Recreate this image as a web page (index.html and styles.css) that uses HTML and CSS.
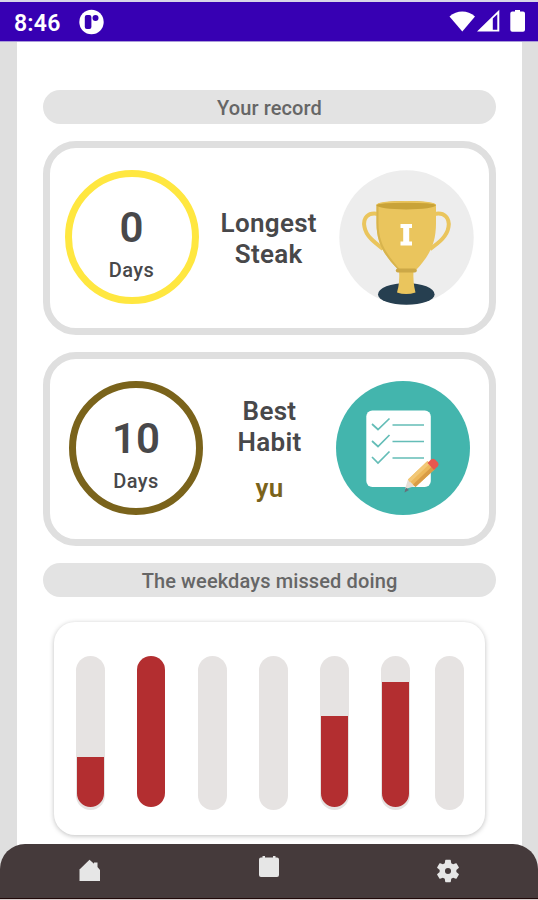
FILE: index.html
```html
<!DOCTYPE html>
<html lang="en">
<head>
<meta charset="utf-8">
<title>Habit records</title>
<link rel="stylesheet" href="styles.css">
</head>
<body>
<div class="screen">
  <header class="status">
    <span class="time">8:46</span>
    <svg class="app-icon" width="26" height="26" viewBox="0 0 26 26"><circle cx="13.500" cy="13" r="12.200" fill="#fff"/><rect x="6.800" y="6" width="6.600" height="14" rx="2" fill="#3700b3"/><circle cx="17.500" cy="9" r="3" fill="#3700b3"/></svg>
    <svg class="signals" width="78" height="26" viewBox="0 0 78 26"><path d="M.5 7.500C8 .8 18.500.8 26 7.500L13.300 22.500Z" fill="#fff"/><path d="M28 22.500H50.300V0.800ZM43.800 9.500V20.800H48.300V5.200Z" fill="#fff" fill-rule="evenodd"/><path d="M66 1h5v1.500h3q2 0 2 2v16.200q0 2-2 2H63.300q-2 0-2-2V4.500q0-2 2-2H66Z" fill="#fff"/></svg>
  </header>
  <main class="content">
    <h2 class="pill">Your record</h2>
    <section class="card streak">
      <div class="ring yellow"><span class="count">0</span><span class="unit">Days</span></div>
      <div class="label"><p>Longest<br>Steak</p></div>
      <svg class="art" width="135" height="135" viewBox="0 0 135 135">
        <circle cx="67.500" cy="67.500" r="67.200" fill="#ededed"/>
        <path d="M39 124.500a28.300 11.500 0 0 1 56.600 0a28.300 10.200 0 0 1-56.600 0Z" fill="#263f50"/>
        <path d="M39 44C29 42 23.500 48 25.500 57C27 66 35 72 44 79M95.500 44C105.500 42 111 48 109.500 57C108 66 101 72 91 79" fill="none" stroke="#eac55d" stroke-width="4"/>
        <path d="M60 99H74.500Q73.800 113 76.500 122.500Q67 125.500 58 122.500Q61 113 60 99Z" fill="#eac55d"/>
        <path d="M37.500 34.500H97V53C97 74 90 86 77.500 99.500H59C45 85 37.500 73 37.500 53Z" fill="#eac55d"/>
        <path d="M37.500 34.500V53C37.500 73 45 85 59 99.500H61C47.500 84 39.500 73 39.500 53V36Z" fill="#d8b44d"/>
        <ellipse cx="67.200" cy="35.200" rx="29.700" ry="4.200" fill="#c9a338"/>
        <path d="M37.500 35Q38 31 67 31T97 35Q94 32.700 67 32.700T37.500 35Z" fill="#eac55d"/>
        <rect x="56.800" y="98.500" width="21" height="4" rx="2" fill="#cca847"/>
        <path d="M61.500 54H73V58H70.200V71.500H73V75.500H61.500V71.500H64.200V58H61.500Z" fill="#fff"/>
      </svg>
    </section>
    <section class="card habit">
      <div class="ring brown"><span class="count">10</span><span class="unit">Days</span></div>
      <div class="label"><p>Best<br>Habit</p><p class="name">yu</p></div>
      <svg class="art" width="134" height="134" viewBox="0 0 134 134">
        <circle cx="67" cy="67" r="67" fill="#43b5ad"/>
        <rect x="30.300" y="29.500" width="64.500" height="76.500" rx="6" fill="#fff"/>
        <g fill="none" stroke="#64bdb7" stroke-width="1.700"><path d="M36 43L42 48.500L53.500 37.500M36 60L42 65.500L53.500 54M36 76L42 82L53.500 70.500"/><path d="M56.500 44H88M56.500 60.500H88M56.500 77H88"/></g>
        <path d="M69 108L72 98.500L79.500 105Z" fill="#e5dfd7"/><path d="M68.500 111.500L69.800 106.500L73 109Z" fill="#66717a"/>
        <path d="M72 98.500L91.500 80L99 88L79.500 106Z" fill="#edb85b"/><path d="M72 98.500L91.500 80L94 82.500L74 101.500Z" fill="#f2c877"/><path d="M77 103.500L96.500 85L99 88L79.500 106Z" fill="#d99c45"/>
        <path d="M91.500 82L95 78.600Q97 77 99 78.500L102 81.500Q103.500 83.500 101.800 85.300L98 89Z" fill="#e8584f"/>
      </svg>
    </section>
    <h2 class="pill">The weekdays missed doing</h2>
    <section class="chart">
      <div class="bar"><i style="height:50px"></i></div>
      <div class="bar"><i class="full" style="height:151px"></i></div>
      <div class="bar"></div>
      <div class="bar"></div>
      <div class="bar"><i style="height:91px"></i></div>
      <div class="bar"><i style="height:125px"></i></div>
      <div class="bar"></div>
    </section>
  </main>
  <nav class="nav">
    <svg width="24" height="24" viewBox="0 0 24 24"><path d="M1 11L11.500 .8L16 4.800V3.500H19.500V8L22 11V22H1.500V11Z" fill="#e6e6e6"/></svg>
    <svg class="calendar" width="24" height="24" viewBox="0 0 24 24"><path d="M4 2.500H5.500V1H8V2.500H16V1H18.500V2.500H20Q22 2.500 22 4.500V20Q22 22 20 22H4Q2 22 2 20V4.500Q2 2.500 4 2.500Z" fill="#e6e6e6"/></svg>
    <svg class="gear" width="28" height="28" viewBox="0 0 24 24"><path fill="#e6e6e6" fill-rule="evenodd" d="M19.140 12.940c.04-.3.060-.61.060-.94s-.02-.64-.07-.94l2.030-1.580c.18-.14.230-.41.120-.61l-1.920-3.320c-.12-.22-.37-.29-.59-.22l-2.390.960c-.5-.38-1.030-.7-1.620-.94L14.400 2.810c-.04-.24-.24-.41-.48-.41h-3.840c-.24 0-.43.170-.47.410l-.36 2.540c-.59.240-1.130.570-1.620.940l-2.390-.96c-.22-.08-.47 0-.59.220L2.740 8.870c-.12.210-.08.470.12.610l2.030 1.580c-.05.300-.09.630-.09.940s.02.640.07.940l-2.030 1.580c-.18.140-.23.410-.12.610l1.920 3.320c.12.220.37.290.59.220l2.390-.96c.5.380 1.030.7 1.620.940l.36 2.540c.05.240.24.410.48.410h3.840c.24 0 .44-.17.470-.41l.36-2.540c.59-.24 1.130-.56 1.620-.94l2.390.960c.22.080.47 0 .59-.22l1.920-3.320c.12-.22.070-.47-.12-.61ZM12 14.600A2.600 2.600 0 1 1 12 9.400A2.600 2.600 0 0 1 12 14.600Z"/></svg>
  </nav>
</div>
</body>
</html>
```
FILE: styles.css
```css
* { box-sizing: border-box; }

body {
  margin: 0;
  font-family: Roboto, "Liberation Sans", sans-serif;
  color: #48484a;
}

h2, p { margin: 0; }
svg { display: block; flex: none; }

.screen {
  width: 538px;
  height: 900px;
  display: flex;
  flex-direction: column;
  overflow: hidden;
  background: #dfdfdf;
}

.status {
  height: 42px;
  flex: none;
  display: flex;
  align-items: center;
  padding: 1px 11px 0 14px;
  background: #3700b3;
  border-top: 2px solid #d9d6e8;
  border-bottom: 1px solid #a99bd8;
  color: #fff;
}

.time {
  width: 64px;
  padding-top: 2px;
  font-size: 23px;
  font-weight: 600;
  letter-spacing: .2px;
}

.signals { margin-left: auto; }

.content {
  flex: none;
  height: 826px;
  margin: 0 16.500px 0 17px;
  padding: 48px 25.500px 0 26px;
  display: flex;
  flex-direction: column;
  background: #fff;
}

.pill {
  flex: none;
  height: 34px;
  border-radius: 17px;
  background: #e3e3e3;
  color: #666;
  font-size: 20px;
  font-weight: 500;
  letter-spacing: .12px;
  line-height: 36px;
  text-align: center;
}

.card {
  flex: none;
  height: 194px;
  margin-top: 17px;
  display: flex;
  align-items: center;
  border: 7px solid #dfdfdf;
  border-radius: 33px;
}

.streak { padding: 0 15px 2px 14.500px; }
.habit { padding: 0 19px 2px; }
.habit + .pill { margin-top: 16.500px; }

.ring {
  flex: none;
  width: 134px;
  height: 134px;
  display: flex;
  flex-direction: column;
  align-items: center;
  padding-top: 25px;
  border: 7px solid;
  border-radius: 50%;
}

.yellow { border-color: #ffe740; }
.brown { border-color: #7a631b; }

.count {
  color: #48484a;
  font-size: 42px;
  font-weight: 600;
  line-height: 52px;
}

.unit {
  color: #48484a;
  font-size: 20px;
  font-weight: 500;
  letter-spacing: .4px;
  line-height: 32px;
}

.label {
  flex: 1;
  padding-top: 4px;
  text-align: center;
  font-size: 26px;
  font-weight: 600;
  letter-spacing: .3px;
  line-height: 31.500px;
}

.name {
  margin-top: 14px;
  color: #7a631b;
}

.chart {
  flex: none;
  width: 431px;
  height: 213px;
  margin: 25.500px 0 0 11px;
  padding: 34px 21.500px 25px;
  display: flex;
  gap: 32.200px;
  border-radius: 21px;
  background: #fff;
  box-shadow: 0 1px 5px rgba(0, 0, 0, .25);
}

.bar {
  flex: none;
  width: 29px;
  display: flex;
  flex-direction: column;
  justify-content: flex-end;
  align-items: center;
  padding-bottom: 3px;
  border-radius: 15px;
  background: #e6e3e2;
}

.bar:last-child { margin-left: -8px; }

.bar i {
  width: 27px;
  border-radius: 0 0 14px 14px;
  background: #b32e30;
}

.bar .full {
  width: 28px;
  border-radius: 14px;
}

.bar:has(.full) { background: none; }

.nav {
  flex: none;
  height: 55px;
  margin-top: -24px;
  display: grid;
  grid-template-columns: repeat(3, 1fr);
  justify-items: center;
  align-items: center;
  border-radius: 25px 25px 0 0;
  border-bottom: 1px solid #210909;
  background: #453a3b;
  box-shadow: 0 2px 0 #d8cccc;
}

.calendar { margin-top: -8px; }
```
